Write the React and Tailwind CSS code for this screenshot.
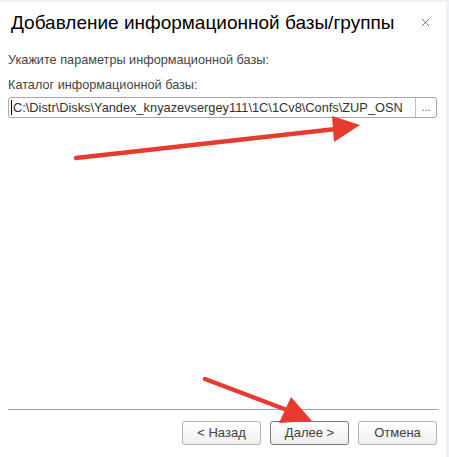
import { X } from "lucide-react";

const Button = ({ children, primary }) => (
  <button
    className={
      primary
        ? "w-[79px] h-[24px] rounded-[3px] border border-[#7a7a7a] bg-gradient-to-b from-white to-[#efefef] text-[13px] text-[#404040]"
        : "w-[79px] h-[24px] rounded-[3px] border border-[#b4b4b4] bg-gradient-to-b from-white to-[#efefef] text-[13px] text-[#404040]"
    }
  >
    {children}
  </button>
);

export default function App() {
  return (
    <div className="relative w-[449px] h-[457px] flex bg-[#eef2f8] font-['Liberation_Sans',Arial,sans-serif]">
      <div className="w-[446px] mt-[2px] bg-white flex flex-col px-[8px]">
        {/* header */}
        <div className="h-[40px] flex items-center justify-between pl-[3px]">
          <h1 className="text-[19px] leading-none text-black">Добавление информационной базы/группы</h1>
          <X className="mr-[6px] text-[#555]" size={13} strokeWidth={1.5} />
        </div>

        <p className="mt-[10px] text-[12.7px] leading-[16px] text-[#444]">Укажите параметры информационной базы:</p>
        <p className="mt-[9px] text-[12.7px] leading-[16px] text-[#444]">Каталог информационной базы:</p>

        <div className="mt-[4px] w-[429px] h-[21px] flex border border-[#a8a8a8] rounded-[3px] overflow-hidden">
          <div className="flex-1 flex items-center pl-[2px] text-[12.8px] text-[#333] whitespace-nowrap overflow-hidden">
            <span className="border-l border-black pl-[1px] leading-[15px]">C:\Distr\Disks\Yandex_knyazevsergey111\1C\1Cv8\Confs\ZUP_OSN</span>
          </div>
          <div className="w-[21px] border-l border-[#c0c0c0] flex items-center justify-center text-[11px] text-[#555]">...</div>
        </div>

        <div className="flex-1" />

        <div className="w-[430px] h-px bg-[#a0a0a0]" />
        <div className="mt-[11px] mb-[12px] flex justify-end gap-[9px] pr-[1px]">
          <Button>&lt; Назад</Button>
          <Button primary>Далее &gt;</Button>
          <Button>Отмена</Button>
        </div>
      </div>
      <div className="flex-1" />

      {/* annotation arrows */}
      <svg className="absolute inset-0 pointer-events-none" width="449" height="457">
        <line x1="76" y1="158" x2="336" y2="129" stroke="#e63b2e" strokeWidth="4.5" strokeLinecap="round" />
        <polygon points="332,116 360,125 334,142" fill="#e63b2e" />
        <line x1="205" y1="379" x2="287" y2="410" stroke="#e63b2e" strokeWidth="4.5" strokeLinecap="round" />
        <polygon points="291,397 312,421 279,423" fill="#e63b2e" />
      </svg>
    </div>
  );
}
